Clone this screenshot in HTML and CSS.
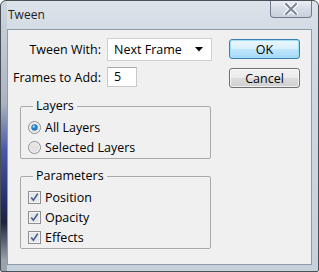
FILE: index.html
```html
<!DOCTYPE html>
<html lang="en">
<head>
  <meta charset="UTF-8">
  <title>Tween</title>
  <link rel="stylesheet" href="styles.css">
</head>
<body>
  <div class="window">
    <div class="titlebar">
      <span class="title">Tween</span>
      <button class="close-btn" aria-label="Close">
        <svg width="16" height="12" viewBox="0 0 16 12">
          <path d="M3 1 L13 11 M13 1 L3 11" stroke="#fff" stroke-width="4.5" stroke-linecap="round"/>
          <path d="M3 1 L13 11 M13 1 L3 11" stroke="#7d8894" stroke-width="2.2" stroke-linecap="round"/>
        </svg>
      </button>
    </div>

    <div class="client">
      <div class="main">
        <div class="fields">
          <label class="field-label">Tween With:</label>
          <div class="select">
            <span>Next Frame</span>
            <svg width="8" height="5" viewBox="0 0 8 5"><path d="M0 0 H8 L4 4.5 Z" fill="#000"/></svg>
          </div>
          <label class="field-label">Frames to Add:</label>
          <div class="text-input">5</div>
        </div>

        <fieldset class="group">
          <legend>Layers</legend>
          <div class="option">
            <svg class="radio" width="13" height="13" viewBox="0 0 13 13">
              <circle cx="6.5" cy="6.5" r="6" fill="#f4f4f4" stroke="#8a8a8a"/>
              <circle cx="6.5" cy="6.5" r="4.5" fill="#e6e6e6"/>
              <circle cx="6.5" cy="6.5" r="3.2" fill="#2a7fc4"/>
              <circle cx="5.8" cy="5.6" r="1.3" fill="#8fd0f5"/>
            </svg>
            <span>All Layers</span>
          </div>
          <div class="option">
            <svg class="radio" width="13" height="13" viewBox="0 0 13 13">
              <circle cx="6.5" cy="6.5" r="6" fill="#f4f4f4" stroke="#8a8a8a"/>
              <circle cx="6.5" cy="6.5" r="4.5" fill="#e2e2e2"/>
            </svg>
            <span>Selected Layers</span>
          </div>
        </fieldset>

        <fieldset class="group group-params">
          <legend>Parameters</legend>
          <div class="option">
            <svg class="check" width="13" height="13" viewBox="0 0 13 13">
              <rect x="0.5" y="0.5" width="12" height="12" fill="#f4f4f4" stroke="#8e8f8f"/>
              <rect x="2" y="2" width="9" height="9" fill="#e4e7ec"/>
              <path d="M3.2 6.4 L5.4 9.2 L9.8 2.6" fill="none" stroke="#4a5a8c" stroke-width="1.6"/>
            </svg>
            <span>Position</span>
          </div>
          <div class="option">
            <svg class="check" width="13" height="13" viewBox="0 0 13 13">
              <rect x="0.5" y="0.5" width="12" height="12" fill="#f4f4f4" stroke="#8e8f8f"/>
              <rect x="2" y="2" width="9" height="9" fill="#e4e7ec"/>
              <path d="M3.2 6.4 L5.4 9.2 L9.8 2.6" fill="none" stroke="#4a5a8c" stroke-width="1.6"/>
            </svg>
            <span>Opacity</span>
          </div>
          <div class="option">
            <svg class="check" width="13" height="13" viewBox="0 0 13 13">
              <rect x="0.5" y="0.5" width="12" height="12" fill="#f4f4f4" stroke="#8e8f8f"/>
              <rect x="2" y="2" width="9" height="9" fill="#e4e7ec"/>
              <path d="M3.2 6.4 L5.4 9.2 L9.8 2.6" fill="none" stroke="#4a5a8c" stroke-width="1.6"/>
            </svg>
            <span>Effects</span>
          </div>
        </fieldset>
      </div>

      <div class="actions">
        <button class="btn btn-default">OK</button>
        <button class="btn">Cancel</button>
      </div>
    </div>
  </div>
</body>
</html>
```

FILE: styles.css
```css
* {
  box-sizing: border-box;
  font-family: 'Open Sans', 'Noto Sans', sans-serif;
}
body {
  margin: 0;
  background-color: #ffffff;
}
.window {
  width: 319px;
  height: 272px;
  border: 1px solid #4a5058;
  border-radius: 6px 6px 2px 2px;
  background:
    linear-gradient(to bottom, #cfd7e0 0%, #aab3c0 38%, #4b5aa6 55%, #2a3270 72%, #1c2240 82%, #9aa2ac 96%) no-repeat 0 0 / 6px 100%,
    linear-gradient(to bottom, #dde3ea 0%, #d2dae3 12%, #c6d1dc 100%);
  display: flex;
  flex-direction: column;
}
.titlebar {
  height: 28px;
  display: flex;
  justify-content: space-between;
  align-items: flex-start;
  padding: 0 6px 0 7px;
}
.title {
  font-size: 12px;
  color: #1e1e1e;
  margin-top: 5px;
}
.close-btn {
  width: 42px;
  height: 17px;
  margin: 0;
  padding: 0;
  border: 1px solid #6f7b88;
  border-top: none;
  border-radius: 0 0 4px 4px;
  background: linear-gradient(to bottom, #e9eef3, #d4dce5 50%, #c7d1dc);
  display: flex;
  align-items: center;
  justify-content: center;
}
.client {
  margin: 0 6px 0 6px;
  height: 236px;
  border: 1px solid #8f9ba8;
  background-color: #f0f0f0;
  display: flex;
  justify-content: space-between;
  font-size: 12px;
  color: #000;
}
.main {
  padding-top: 8px;
  width: 205px;
}
.fields {
  display: grid;
  grid-template-columns: 93px auto;
  column-gap: 6px;
  row-gap: 6px;
  align-items: center;
}
.field-label {
  text-align: right;
  font-size: 12.5px;
}
.select {
  width: 105px;
  height: 23px;
  border: 1px solid #d0d0d0;
  background-color: #fff;
  display: flex;
  align-items: center;
  justify-content: space-between;
  padding: 0 8px 0 6px;
  font-size: 12.5px;
}
.text-input {
  width: 30px;
  height: 20px;
  border: 1px solid #c8c8c8;
  border-top-color: #aaaaaa;
  background-color: #fff;
  padding-left: 6px;
  line-height: 18px;
  font-size: 12.5px;
}
.group {
  margin: 11px 0 0 12px;
  width: 191px;
  padding: 3px 7px 1px 7px;
  border: 1px solid #a9a9a9;
  border-radius: 2px;
}
.group legend {
  margin-left: 5px;
  padding: 0 3px;
  font-size: 12.5px;
  line-height: 16px;
}
.group-params {
  margin-top: 9px;
}
.option {
  height: 20px;
  display: flex;
  align-items: center;
  gap: 4px;
  font-size: 12.5px;
}
.radio, .check {
  flex: none;
}
.actions {
  display: flex;
  flex-direction: column;
  gap: 9px;
  padding: 9px 11px 0 0;
}
.btn {
  width: 71px;
  height: 20px;
  margin: 0;
  padding: 0;
  font-size: 12.5px;
  color: #000;
  border: 1px solid #707070;
  border-radius: 3px;
  background: linear-gradient(to bottom, #f2f2f2 0%, #ebebeb 48%, #dddddd 52%, #cfcfcf 100%);
  box-shadow: inset 0 0 0 1px rgba(255, 255, 255, 0.7);
}
.btn-default {
  border-color: #3c7fb1;
  background: linear-gradient(to bottom, #eaf6fd 0%, #d9f0fc 48%, #bee6fd 52%, #a7d9f5 100%);
  box-shadow: inset 0 0 0 1px #9ee0f8;
}
```
